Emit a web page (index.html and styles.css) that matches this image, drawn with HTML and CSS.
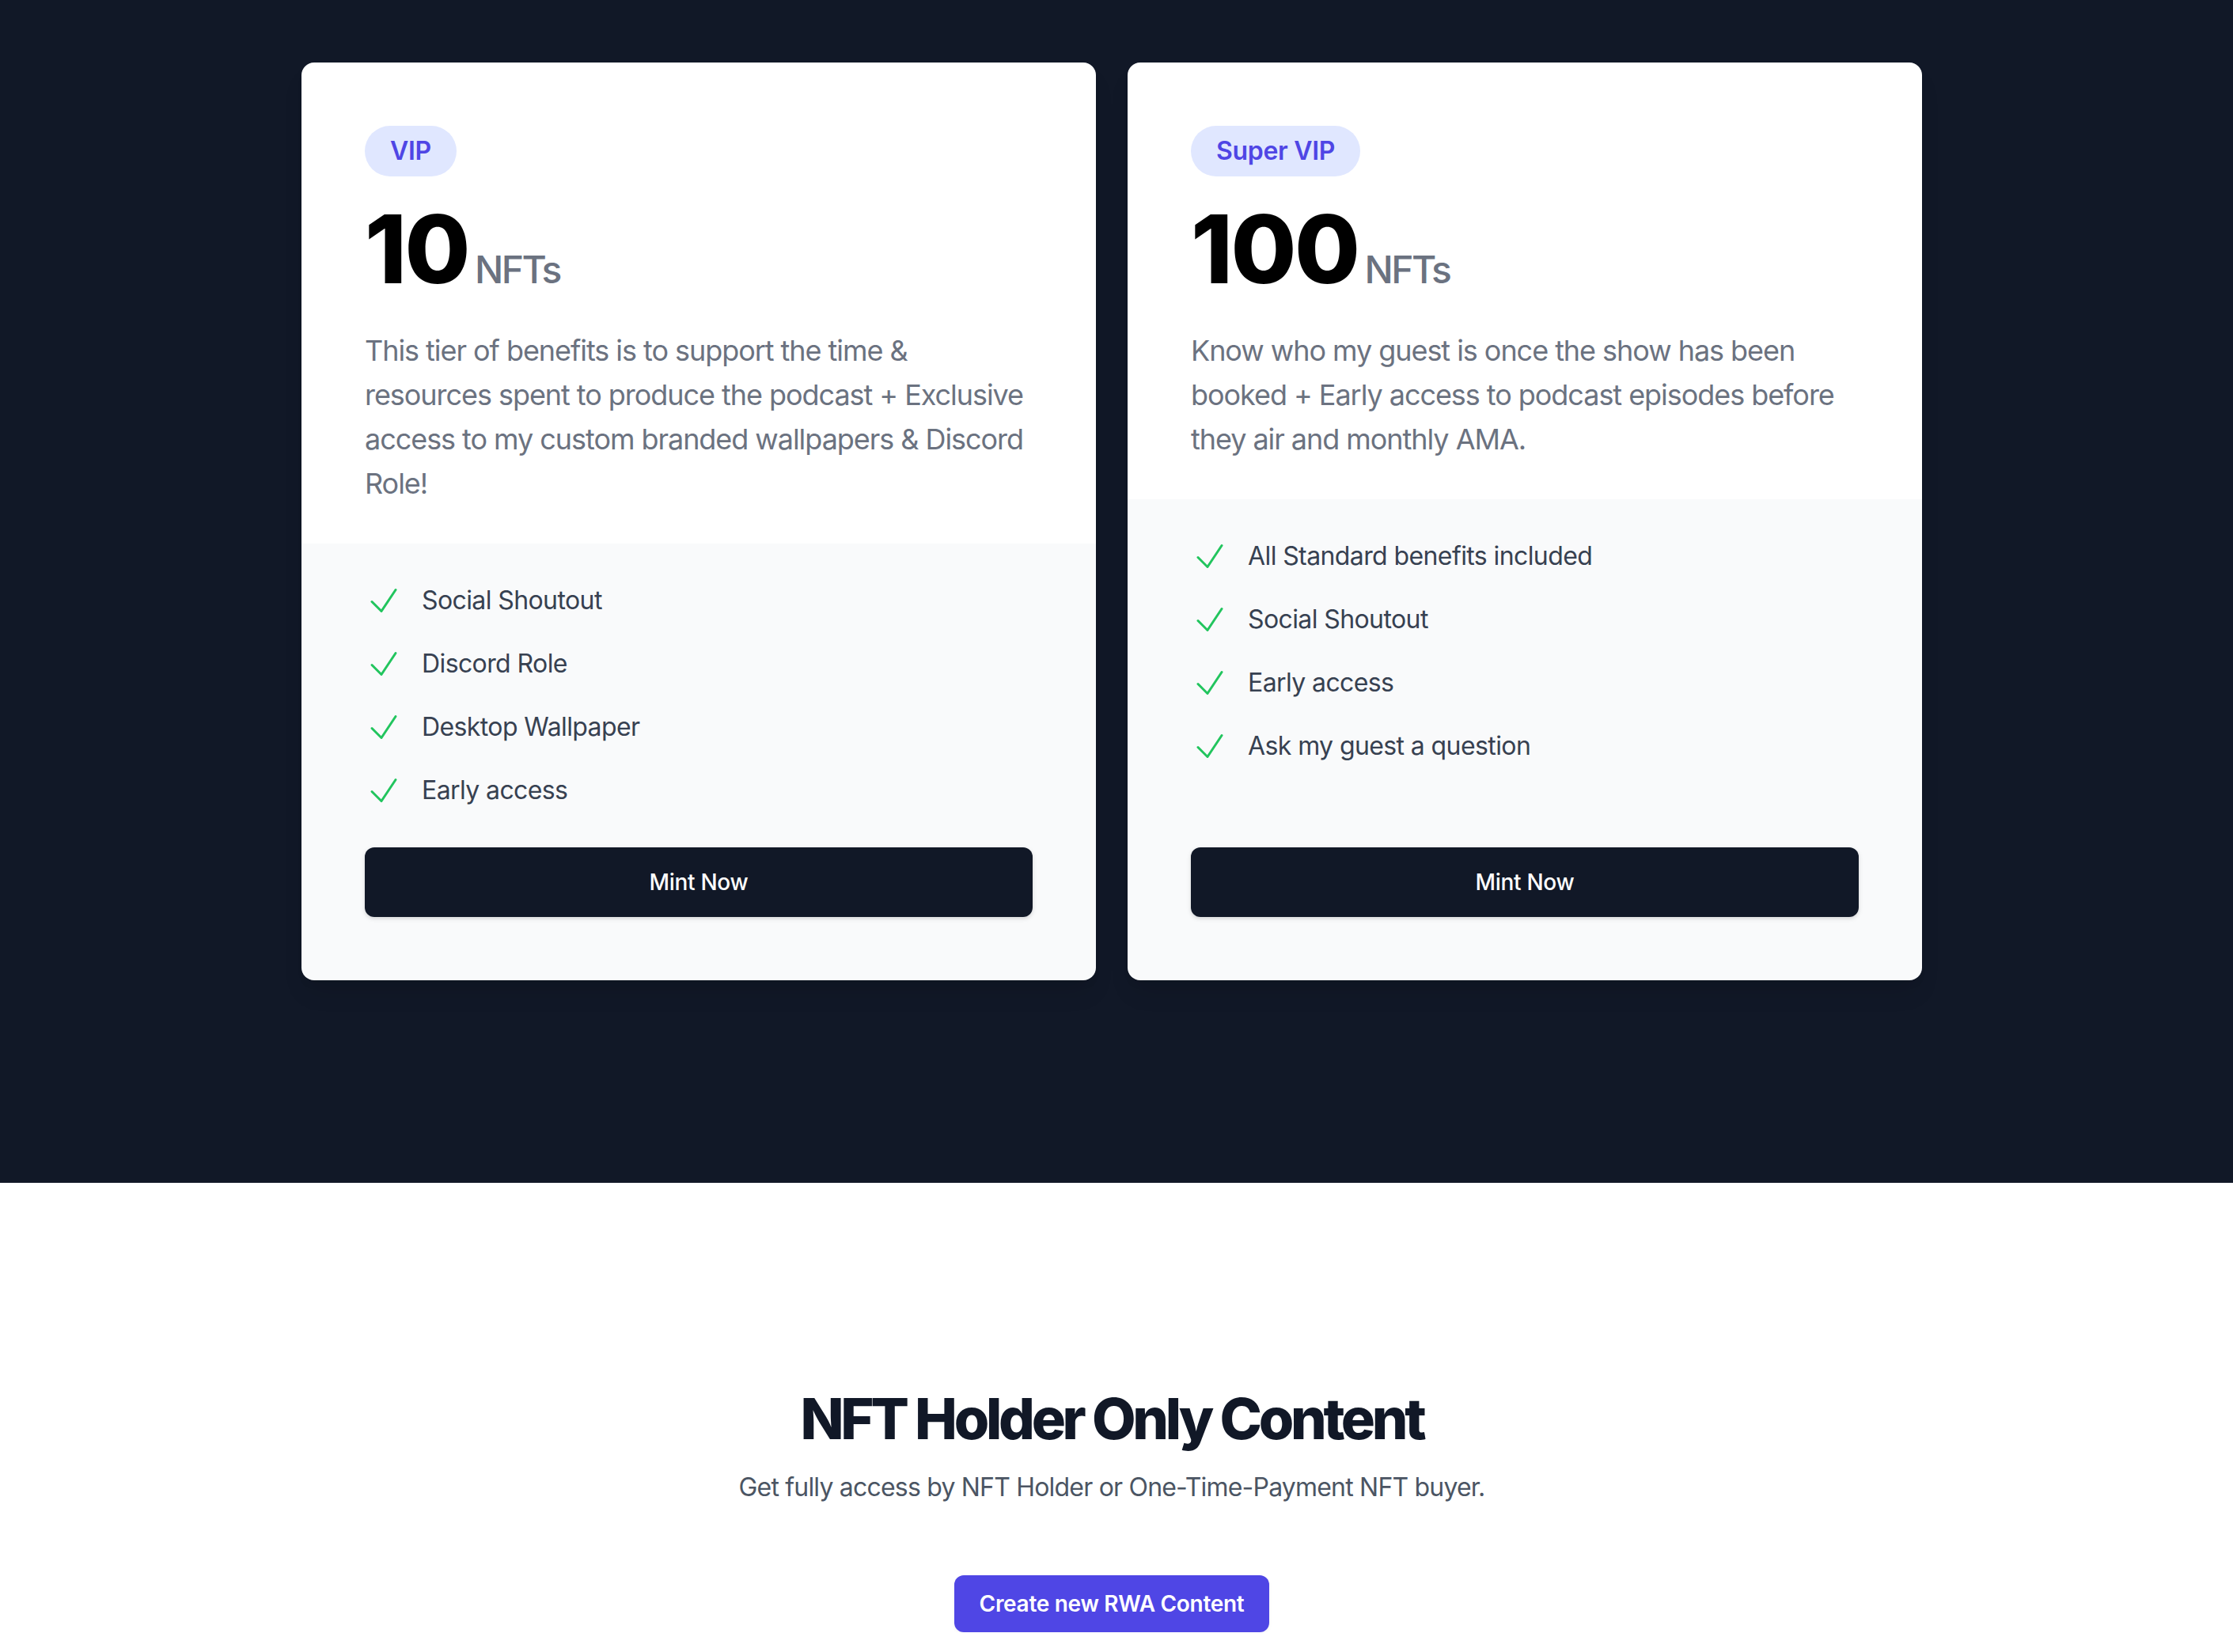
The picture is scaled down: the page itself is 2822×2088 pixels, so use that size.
FILE: index.html
```html
<!DOCTYPE html>
<html lang="en">
<head>
<meta charset="utf-8">
<title>NFT Tiers</title>
<link rel="stylesheet" href="styles.css">
</head>
<body>
<section class="pricing">
  <div class="tiers">
    <div class="tier">
      <div class="tier-head">
        <div><h3 class="badge">VIP</h3></div>
        <div class="price">10<span class="unit">NFTs</span></div>
        <p class="desc">This tier of benefits is to support the time &amp; resources spent to produce the podcast + Exclusive access to my custom branded wallpapers &amp; Discord Role!</p>
      </div>
      <div class="tier-body">
        <ul class="features">
          <li><svg class="check" viewBox="0 0 24 24" fill="none" stroke="currentColor" stroke-width="1.5"><path stroke-linecap="round" stroke-linejoin="round" d="M4.5 12.75l6 6 9-13.5"/></svg><p>Social Shoutout</p></li>
          <li><svg class="check" viewBox="0 0 24 24" fill="none" stroke="currentColor" stroke-width="1.5"><path stroke-linecap="round" stroke-linejoin="round" d="M4.5 12.75l6 6 9-13.5"/></svg><p>Discord Role</p></li>
          <li><svg class="check" viewBox="0 0 24 24" fill="none" stroke="currentColor" stroke-width="1.5"><path stroke-linecap="round" stroke-linejoin="round" d="M4.5 12.75l6 6 9-13.5"/></svg><p>Desktop Wallpaper</p></li>
          <li><svg class="check" viewBox="0 0 24 24" fill="none" stroke="currentColor" stroke-width="1.5"><path stroke-linecap="round" stroke-linejoin="round" d="M4.5 12.75l6 6 9-13.5"/></svg><p>Early access</p></li>
        </ul>
        <div class="cta"><a href="#" class="mint">Mint Now</a></div>
      </div>
    </div>
    <div class="tier">
      <div class="tier-head">
        <div><h3 class="badge">Super VIP</h3></div>
        <div class="price">100<span class="unit">NFTs</span></div>
        <p class="desc">Know who my guest is once the show has been booked + Early access to podcast episodes before they air and monthly AMA.</p>
      </div>
      <div class="tier-body">
        <ul class="features">
          <li><svg class="check" viewBox="0 0 24 24" fill="none" stroke="currentColor" stroke-width="1.5"><path stroke-linecap="round" stroke-linejoin="round" d="M4.5 12.75l6 6 9-13.5"/></svg><p>All Standard benefits included</p></li>
          <li><svg class="check" viewBox="0 0 24 24" fill="none" stroke="currentColor" stroke-width="1.5"><path stroke-linecap="round" stroke-linejoin="round" d="M4.5 12.75l6 6 9-13.5"/></svg><p>Social Shoutout</p></li>
          <li><svg class="check" viewBox="0 0 24 24" fill="none" stroke="currentColor" stroke-width="1.5"><path stroke-linecap="round" stroke-linejoin="round" d="M4.5 12.75l6 6 9-13.5"/></svg><p>Early access</p></li>
          <li><svg class="check" viewBox="0 0 24 24" fill="none" stroke="currentColor" stroke-width="1.5"><path stroke-linecap="round" stroke-linejoin="round" d="M4.5 12.75l6 6 9-13.5"/></svg><p>Ask my guest a question</p></li>
        </ul>
        <div class="cta"><a href="#" class="mint">Mint Now</a></div>
      </div>
    </div>
  </div>
</section>
<section class="holder">
  <h2 class="holder-title">NFT Holder Only Content</h2>
  <p class="holder-sub">Get fully access by NFT Holder or One-Time-Payment NFT buyer.</p>
  <div class="holder-actions"><a href="#" class="create">Create new RWA Content</a></div>
</section>
</body>
</html>
```
FILE: styles.css
```css
* { box-sizing: border-box; }
html, body { margin: 0; padding: 0; }
body {
  font-family: Inter, "Noto Sans", "Liberation Sans", sans-serif;
  background: #ffffff;
  color: #111827;
}
h2, h3, p, ul { margin: 0; padding: 0; }
a { text-decoration: none; }

.pricing {
  background: #111827;
  padding: 79px 12px 256px 0;
}
.tiers {
  width: 2048px;
  margin: 0 auto;
  display: grid;
  grid-template-columns: 1fr 1fr;
  gap: 40px;
}
.tier {
  display: flex;
  flex-direction: column;
  border-radius: 16px;
  overflow: hidden;
  box-shadow: 0 20px 30px -6px rgba(0,0,0,0.1), 0 8px 12px -4px rgba(0,0,0,0.05);
}
.tier-head {
  background: #ffffff;
  padding: 80px 80px 48px;
}
.badge {
  display: inline-flex;
  padding: 8px 32px;
  border-radius: 9999px;
  background: #e0e7ff;
  color: #4f46e5;
  font-size: 32px;
  line-height: 48px;
  font-weight: 600;
  letter-spacing: -0.3px;
}
.price {
  margin-top: 32px;
  display: flex;
  align-items: baseline;
  font-size: 120px;
  line-height: 1;
  font-weight: 800;
  letter-spacing: -2.5px;
  color: #000000;
}
.unit {
  margin-left: 8px;
  font-size: 48px;
  line-height: 64px;
  font-weight: 500;
  letter-spacing: -2.6px;
  color: #6b7280;
}
.desc {
  margin-top: 40px;
  font-size: 36px;
  line-height: 56px;
  letter-spacing: -1.05px;
  color: #6b7280;
}
.tier-body {
  flex: 1;
  display: flex;
  flex-direction: column;
  justify-content: space-between;
  gap: 48px;
  background: #f9fafb;
  padding: 48px 80px 80px;
}
.features {
  list-style: none;
  display: flex;
  flex-direction: column;
  gap: 32px;
}
.features li {
  display: flex;
  align-items: flex-start;
}
.check {
  flex-shrink: 0;
  width: 48px;
  height: 48px;
  color: #22c55e;
}
.features p {
  margin-left: 24px;
  font-size: 32px;
  line-height: 48px;
  letter-spacing: -0.6px;
  color: #374151;
}
.cta {
  border-radius: 12px;
  box-shadow: 0 2px 6px 0 rgba(0,0,0,0.1), 0 2px 4px 0 rgba(0,0,0,0.06);
}
.mint {
  display: flex;
  align-items: center;
  justify-content: center;
  padding: 24px 40px;
  border-radius: 12px;
  background: #111827;
  color: #ffffff;
  font-size: 28px;
  line-height: 40px;
  font-weight: 500;
  letter-spacing: -0.3px;
}

.holder {
  padding-top: 258px;
  padding-right: 12px;
  text-align: center;
}
.holder-title {
  font-size: 72px;
  line-height: 80px;
  font-weight: 800;
  letter-spacing: -4.3px;
  color: #111827;
}
.holder-sub {
  margin-top: 23px;
  font-size: 32px;
  line-height: 48px;
  letter-spacing: -0.8px;
  color: #4b5563;
}
.holder-actions {
  margin-top: 87px;
}
.create {
  display: inline-block;
  padding: 16px 32px;
  border-radius: 12px;
  background: #4f46e5;
  color: #ffffff;
  font-size: 28px;
  line-height: 40px;
  font-weight: 600;
  letter-spacing: -0.3px;
  box-shadow: 0 2px 4px 0 rgba(0,0,0,0.05);
}
```
